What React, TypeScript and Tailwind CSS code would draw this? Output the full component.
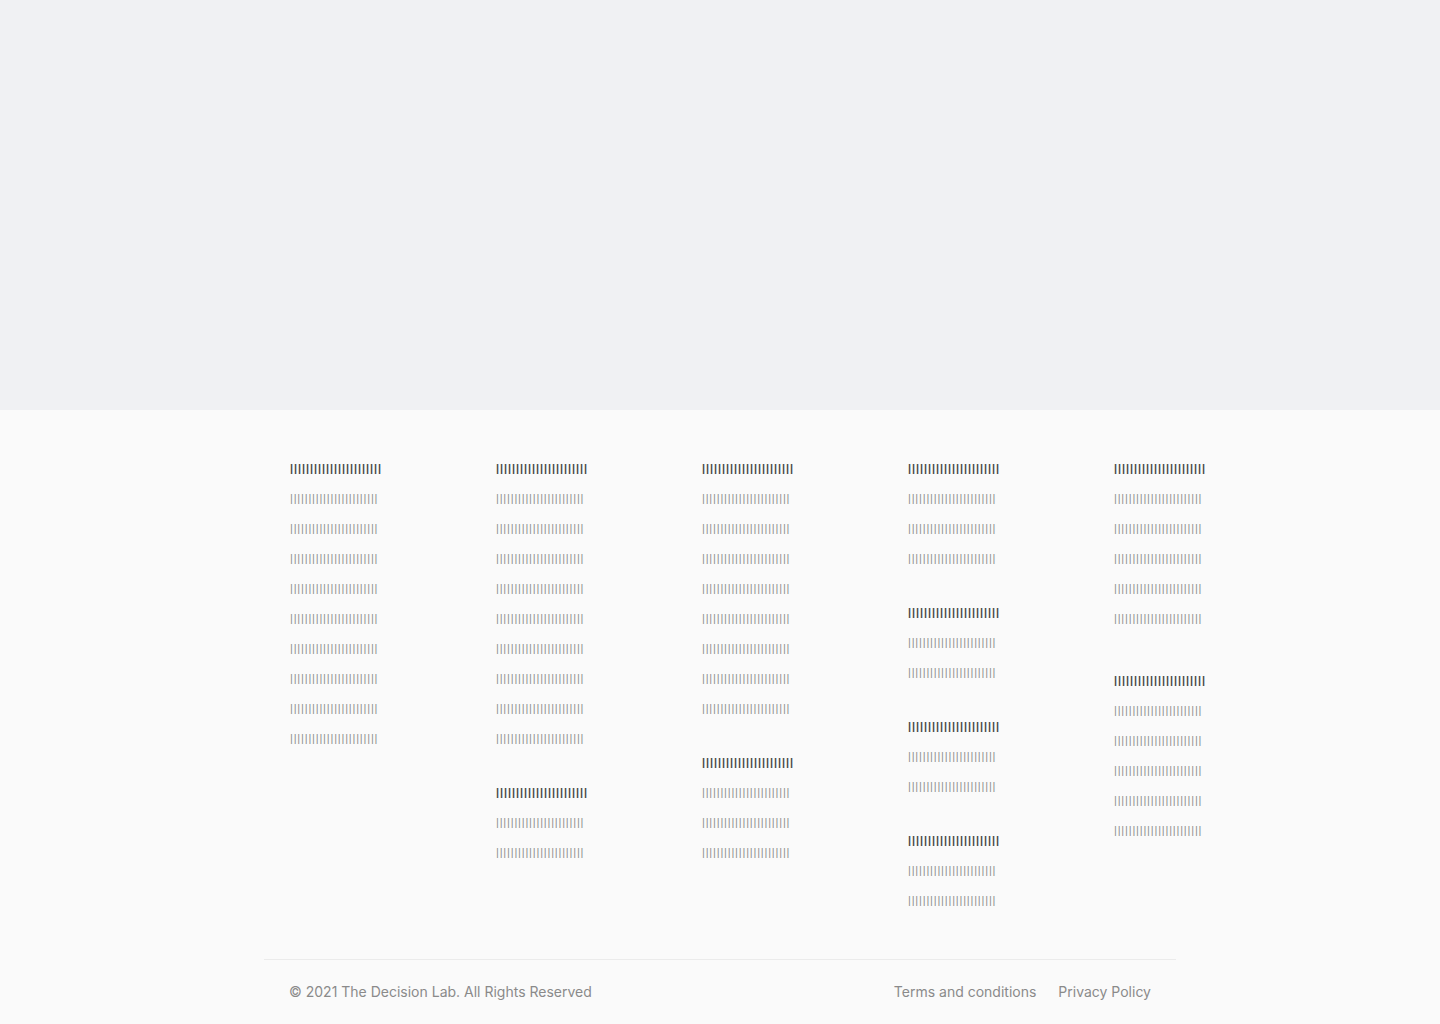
const BAR_HEAD = "|".repeat(23);
const BAR_LINK = "|".repeat(24);

type Section = { links: number; gap?: string };

const columns: Section[][] = [
  [{ links: 9 }],
  [{ links: 9 }, { links: 2, gap: "mt-6" }],
  [{ links: 8 }, { links: 3, gap: "mt-6" }],
  [
    { links: 3 },
    { links: 2, gap: "mt-6" },
    { links: 2, gap: "mt-6" },
    { links: 2, gap: "mt-6" },
  ],
  [{ links: 5 }, { links: 5, gap: "mt-8" }],
];

const FooterSection = ({ links, gap }: Section) => (
  <div className={`flex flex-col ${gap ?? ""}`}>
    <div className="h-[30px] whitespace-nowrap text-[11px] leading-[30px] font-bold tracking-[0.92px] text-[#4a4a4a] font-['Liberation_Sans',sans-serif]">
      {BAR_HEAD}
    </div>
    {Array.from({ length: links }).map((_, i) => (
      <a
        key={i}
        href="#"
        className="h-[30px] whitespace-nowrap text-[11px] leading-[30px] tracking-[0.82px] text-[#8e8e8e] font-['Liberation_Sans',sans-serif]"
      >
        {BAR_LINK}
      </a>
    ))}
  </div>
);

export default function App() {
  return (
    <div className="min-h-[1024px] w-full bg-[#fafafa] font-['Inter',sans-serif]">
      <div className="h-[410px] w-full bg-[#f0f1f3]" />
      <footer className="w-full bg-[#fafafa]">
        <div className="mx-auto w-[912px]">
          <div className="flex gap-[116px] pl-[26px] pt-[43px] pb-[44px]">
            {columns.map((sections, ci) => (
              <div key={ci} className="flex w-[90px] shrink-0 flex-col">
                {sections.map((s, si) => (
                  <FooterSection key={si} {...s} />
                ))}
              </div>
            ))}
          </div>
          <div className="flex h-[65px] items-center justify-between border-t border-[#ebebeb] pl-[25px] pr-[25px] pb-[2px] text-[14px] text-[#8a8a8a]">
            <span>© 2021 The Decision Lab. All Rights Reserved</span>
            <div className="flex items-center gap-[22px]">
              <a href="#">Terms and conditions</a>
              <a href="#">Privacy Policy</a>
            </div>
          </div>
        </div>
      </footer>
    </div>
  );
}
